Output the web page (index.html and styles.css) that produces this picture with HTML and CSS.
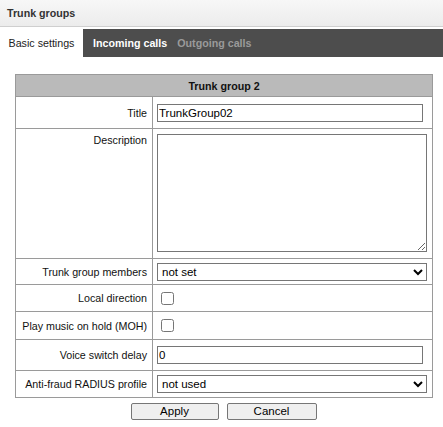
FILE: index.html
```html
<!DOCTYPE html>
<html>
<head>
<meta charset="utf-8">
<link rel="stylesheet" href="styles.css">
</head>
<body>
<div class="title-bar">Trunk groups</div>
<div class="tabs">
  <div class="tab tab-active">Basic settings</div>
  <div class="tab-rest">
    <div class="tab tab-light">Incoming calls</div>
    <div class="tab tab-dim">Outgoing calls</div>
  </div>
</div>
<table class="form">
  <colgroup><col class="c-lbl"><col class="c-val"></colgroup>
  <tr><th colspan="2" class="head">Trunk group 2</th></tr>
  <tr class="r-title">
    <td class="lbl">Title</td>
    <td class="val"><input type="text" class="txt" value="TrunkGroup02"></td>
  </tr>
  <tr class="r-desc">
    <td class="lbl lbl-top">Description</td>
    <td class="val val-desc"><textarea class="area"></textarea></td>
  </tr>
  <tr class="r-members">
    <td class="lbl">Trunk group members</td>
    <td class="val"><select class="sel"><option>not set</option></select></td>
  </tr>
  <tr class="r-local">
    <td class="lbl">Local direction</td>
    <td class="val"><input type="checkbox" class="chk"></td>
  </tr>
  <tr class="r-moh">
    <td class="lbl">Play music on hold (MOH)</td>
    <td class="val"><input type="checkbox" class="chk"></td>
  </tr>
  <tr class="r-voice">
    <td class="lbl">Voice switch delay</td>
    <td class="val"><input type="text" class="txt" value="0"></td>
  </tr>
  <tr class="r-anti">
    <td class="lbl">Anti-fraud RADIUS profile</td>
    <td class="val"><select class="sel"><option>not used</option></select></td>
  </tr>
</table>
<div class="buttons">
  <button class="btn btn-apply">Apply</button>
  <button class="btn btn-cancel">Cancel</button>
</div>
</body>
</html>
```

FILE: styles.css
```css
html, body {
  margin: 0;
  padding: 0;
  background: #ffffff;
  font-family: "Liberation Sans", Arial, sans-serif;
  font-size: 10.7px;
  color: #000;
}

.title-bar {
  height: 26px;
  line-height: 26px;
  padding-left: 7px;
  font-weight: bold;
  color: #333;
  background: linear-gradient(#f7f7f7, #ececec);
  border-bottom: 1px solid #cfcfcf;
  margin-bottom: 2px;
}

.tabs {
  display: flex;
  height: 28px;
}

.tab {
  line-height: 28px;
  white-space: nowrap;
}

.tab-active {
  width: 83px;
  text-align: center;
  background: #fff;
  color: #222;
}

.tab-rest {
  flex: 1;
  display: flex;
  background: #4d4d4d;
  padding-left: 10px;
  gap: 10px;
}

.tab-light {
  color: #fff;
  font-weight: bold;
}

.tab-dim {
  color: #9a9a9a;
  font-weight: bold;
}

.form {
  margin: 17px 0 0 15px;
  width: 417px;
  border-collapse: collapse;
  border: 1px solid #9a9a9a;
  table-layout: fixed;
}

.c-lbl { width: 137px; }
.c-val { width: 280px; }

.form td, .form th {
  border: 1px solid #9a9a9a;
  padding: 0;
}

.head {
  height: 21px;
  background: #bababa;
  font-weight: bold;
  text-align: center;
  color: #111;
}

.lbl {
  text-align: right;
  padding-right: 5px !important;
  white-space: nowrap;
  vertical-align: middle;
  color: #111;
}

.lbl-top {
  vertical-align: top;
  padding-top: 5px !important;
}

.val {
  padding-left: 4px !important;
  vertical-align: middle;
}

.r-title td { height: 31px; }
.r-desc td { height: 124px; }
.r-members td { height: 25px; }
.r-local td { height: 26px; }
.r-moh td { height: 27px; }
.r-voice td { height: 30px; }
.r-anti td { height: 26px; }

.val-desc {
  vertical-align: top;
  padding-top: 5px !important;
}

.txt {
  box-sizing: border-box;
  width: 266px;
  height: 18px;
  margin: 0;
  padding: 0 1px;
  border: 1px solid #767676;
  font-family: "Liberation Sans", Arial, sans-serif;
  font-size: 11.5px;
  display: block;
}

.area {
  box-sizing: border-box;
  width: 270px;
  height: 118px;
  margin: 0;
  border: 1px solid #767676;
  display: block;
  font-family: "Liberation Sans", Arial, sans-serif;
  font-size: 11.5px;
}

.sel {
  box-sizing: border-box;
  width: 270px;
  height: 18px;
  margin: 0;
  border: 1px solid #767676;
  border-radius: 0;
  font-family: "Liberation Sans", Arial, sans-serif;
  font-size: 11.5px;
  display: block;
  background: #fff;
  color: #000;
}

.chk {
  margin: 3px 3px 3px 4px;
  width: 13px;
  height: 13px;
  display: block;
}

.buttons {
  display: flex;
  justify-content: center;
  gap: 8px;
  width: 447px;
  margin-top: 5px;
}

.btn {
  box-sizing: border-box;
  height: 17px;
  padding: 0;
  margin: 0;
  border: 1px solid #767676;
  border-radius: 2px;
  background: #efefef;
  font-family: "Liberation Sans", Arial, sans-serif;
  font-size: 11.5px;
  line-height: 15px;
  color: #000;
}

.btn-apply { width: 88px; }
.btn-cancel { width: 90px; }
```
